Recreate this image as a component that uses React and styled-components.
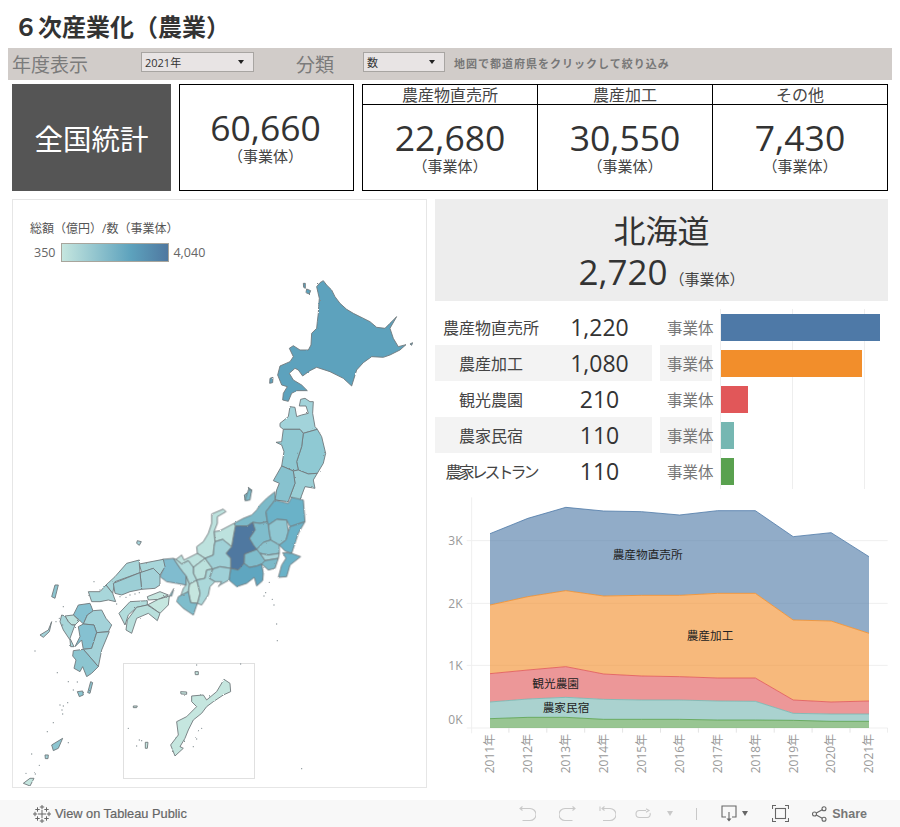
import styled, { createGlobalStyle } from "styled-components";

const FONT = '"Open Sans", "Noto Sans CJK JP", sans-serif';

const GlobalStyle = createGlobalStyle`
  html, body {
    margin: 0;
    background: #fff;
  }
  body {
    font-family: ${FONT};
    color: #333;
  }
`;

// prefecture outlines, each group traced in its own crop of the map
const mapGroups = [
  {
    x: 180,
    y: 270,
    shapes: [
      ["#5da2bd", "430,32 420,38 410,50 414,68 418,85 416,110 415,130 412,155 410,175 395,190 393,225 385,240 360,240 340,227 328,235 340,260 330,275 300,288 293,315 305,345 322,350 310,370 308,390 325,394 335,370 350,362 382,362 365,345 340,330 328,310 345,295 355,300 368,318 390,302 410,292 450,305 490,325 515,348 530,300 550,278 575,260 610,262 630,255 660,240 678,224 655,230 640,205 630,175 650,140 630,160 615,175 590,172 570,155 520,130 500,118 480,100 465,80 455,60 440,45"],
      ["#5da2bd", "380,57 392,62 388,72 378,68"],
      ["#5da2bd", "370,40 376,40 376,55 371,52"],
      ["#5da2bd", "270,325 279,322 278,338 269,340"],
      ["#5da2bd", "690,222 698,218 695,226"],
      ["#a2d3da", "300,460 325,440 330,410 345,412 350,440 365,435 385,430 378,408 358,408 362,388 375,385 390,395 400,395 398,430 405,470 412,478 370,490 360,478 310,478 300,470"],
      ["#8fc9d3", "370,490 412,478 425,500 437,550 430,580 412,610 385,612 355,600 350,575 365,530"],
      ["#8ec8d2", "310,478 360,478 370,490 365,530 350,575 355,600 340,603 305,588 312,545 305,525 288,517 305,515"],
      ["#9bcfd6", "355,600 385,612 412,610 400,630 405,655 375,650 358,695 330,680 345,640 340,603"],
      ["#87c2cf", "305,588 340,603 345,640 330,680 325,695 285,690 290,660 298,640 280,632"],
      ["#7bbac9", "205,652 215,660 205,690 195,690 193,675 208,665"],
    ],
  },
  {
    x: 160,
    y: 490,
    shapes: [
      ["#7bbac9", "222,100 250,85 275,75 290,60 300,45 320,25 345,5 345,30 318,65 322,95 300,100 278,97 262,108 226,108"],
      ["#6bb2c8", "345,30 385,40 395,22 430,30 435,95 390,110 380,90 350,88 325,105 322,95 318,65"],
      ["#8fc7d2", "325,105 350,88 380,90 385,125 378,150 358,165 332,150 328,130"],
      ["#6bb2c8", "390,110 435,95 415,130 395,190 375,183 358,165 378,150 385,125"],
      ["#7fbdcc", "278,97 300,100 322,95 325,105 328,130 332,150 310,157 290,178 280,165 268,145 285,120"],
      ["#8cc5d0", "290,178 310,157 332,150 358,165 358,190 325,195 300,190"],
      ["#6bb2c8", "368,188 395,190 422,200 390,225 380,260 355,262 365,225 378,205"],
      ["#a6d4da", "300,190 325,195 358,190 355,205 325,210 315,212"],
      ["#7bbac9", "315,212 325,210 355,205 345,235 325,240 305,222"],
      ["#7fbdcc", "253,192 290,178 300,190 315,212 305,222 290,228 268,232 252,220"],
      ["#4f78a0", "226,108 262,108 278,97 285,120 268,145 280,165 290,178 253,192 252,220 235,240 212,235 212,205 198,190 215,170 220,140"],
      ["#5ea6c0", "212,235 235,240 252,220 268,232 290,228 305,222 310,250 308,272 290,288 283,262 260,280 230,290 207,270"],
      ["#bde2de", "162,125 180,122 222,100 226,108 220,140 215,170 188,148 165,155"],
      ["#bde2de", "110,170 130,155 145,130 155,100 155,72 190,57 198,65 172,80 172,100 162,125 165,155 162,170 160,195 135,205 112,190"],
      ["#bde2de", "48,208 65,195 72,210 112,190 135,205 100,232 85,212 65,222"],
      ["#a0d1d7", "165,155 188,148 215,170 198,190 212,205 212,235 180,230 158,237 135,205 160,195 162,170"],
      ["#9fd0d7", "158,237 180,230 212,235 207,270 180,285 175,290 185,275 165,275 148,265"],
      ["#bbe1dd", "100,232 135,205 158,237 140,240 135,265 110,270 100,250"],
      ["#abd8da", "140,240 158,237 148,265 165,275 150,290 145,315 125,345 112,340 120,310 110,270 135,265"],
      ["#c5e6df", "88,282 110,270 120,310 112,340 92,338 85,305"],
      ["#b2dcdc", "40,205 48,208 65,222 85,212 100,232 100,250 110,270 88,282 78,258 60,235"],
      ["#b2dcdc", "78,258 88,282 85,305 62,318 70,295 78,285"],
      ["#80bccf", "8,208 40,205 60,235 78,258 78,285 50,280 20,275 0,260 10,235"],
      ["#7fbdcc", "55,320 85,305 92,338 112,340 100,375 70,355 50,335"],
      ["#7fbdcc", "28,318 42,295 35,318"],
      ["#7bbac9", "265,0 275,0 270,30 255,32"],
    ],
  },
  {
    x: 50,
    y: 550,
    shapes: [
      ["#a8d6da", "268,42 340,28 345,50 330,75 310,55 275,68"],
      ["#a3d2d9", "270,68 310,55 330,75 330,105 315,115 275,118"],
      ["#a8d6da", "168,105 195,80 230,40 268,30 268,42 270,68 195,95 188,130"],
      ["#9ccfd6", "190,100 270,68 275,118 240,125 215,135 195,130"],
      ["#a8d6da", "115,125 150,125 168,105 188,130 197,155 175,150 150,155 125,155"],
      ["#c5e6df", "292,140 330,125 355,135 325,148 295,150"],
      ["#c5e6df", "292,165 325,148 358,138 355,165 330,190 300,168"],
      ["#b2dcdc", "207,190 240,155 292,152 292,165 260,172 235,195 225,225"],
      ["#b8dfdc", "228,240 232,210 260,172 292,165 330,190 322,212 295,190 260,205 245,250"],
      ["#85c1d1", "85,165 120,160 130,185 112,195 100,222 88,210 70,195"],
      ["#bde2de", "45,198 70,195 88,212 75,225 65,225 55,215"],
      ["#a3d2d9", "112,195 130,182 155,180 168,205 185,225 175,245 140,248 132,225 100,222"],
      ["#85c1d1", "85,230 100,222 132,225 140,248 125,295 100,298 95,270 75,290 90,260"],
      ["#a3d2d9", "140,248 178,245 155,300 145,350 100,298 125,295"],
      ["#8cc5d0", "70,302 100,298 145,350 125,370 110,380 98,350 90,365 72,355 78,330 68,318"],
      ["#a8d6da", "35,195 45,198 55,215 65,225 75,225 60,265 72,290 62,290 60,270 40,240 30,215"],
    ],
  },
  {
    x: 20,
    y: 490,
    shapes: [
      ["#a3d2d9", "60,435 85,420 95,395 88,425 70,442"],
      ["#8cc5d0", "105,285 115,285 105,325 95,320"],
      ["#8cc5d0", "172,605 188,603 190,615 178,620"],
      ["#8cc5d0", "212,575 218,578 210,610 203,608"],
      ["#8cc5d0", "95,765 128,745 115,775 100,782"],
      ["#a3d2d9", "75,795 85,795 84,806 76,806"],
      ["#c5e6df", "10,880 30,865 42,865 30,888"],
      ["#a3d2d9", "352,152 364,155 358,166 350,160"],
      ["#c5e6df", "612,568 630,580 632,605 610,615 580,635 560,650 545,670 520,690 505,720 495,745 480,770 490,775 465,798 452,765 475,735 470,695 500,680 530,650 515,635 515,618 550,615 560,630 590,605"],
      ["#c5e6df", "482,605 500,606 500,613 483,612"],
      ["#c5e6df", "525,545 535,545 535,554 526,554"],
      ["#c5e6df", "340,648 352,648 350,653 340,653"],
      ["#c5e6df", "376,757 384,757 382,775 376,775"],
    ],
  },
];

const specks = [
  "770,402", "772,452", "748,277", "737,308", "732,318", "757,328", "762,345", "845,836", "45,483", "112,548", "145,575", "172,576",
  "160,600", "143,638", "130,648", "126,660", "120,645", "128,672", "100,698", "82,725", "145,758", "35,792", "58,826", "18,850", "46,852",
  "222,275", "240,300", "530,525", "662,522", "325,715", "358,750", "350,768", "365,752", "520,770", "530,747",
  "330,315", "345,312", "358,308", "300,320", "318,322", "290,342", "130,350", "118,385", "108,395", "128,405", "545,715", "535,722",
];

const years = ["2011", "2012", "2013", "2014", "2015", "2016", "2017", "2018", "2019", "2020", "2021"];
const yearX = (i) => 165 + i * 113.7;

const layers = [
  { color: "#4e79a7", top: [131, 85, 52, 63, 65, 75, 62, 62, 140, 128, 200], bottom: [345, 320, 302, 318, 316, 316, 310, 310, 390, 393, 430] },
  { color: "#f28e2b", top: [345, 320, 302, 318, 316, 316, 310, 310, 390, 393, 430], bottom: [551, 540, 530, 552, 558, 560, 564, 564, 630, 636, 633] },
  { color: "#e15759", top: [551, 540, 530, 552, 558, 560, 564, 564, 630, 636, 633], bottom: [636, 627, 622, 628, 630, 630, 633, 634, 670, 672, 672] },
  { color: "#76b7b2", top: [636, 627, 622, 628, 630, 630, 633, 634, 670, 672, 672], bottom: [686, 682, 682, 688, 688, 688, 690, 690, 691, 694, 694] },
  { color: "#59a14f", top: [686, 682, 682, 688, 688, 688, 690, 690, 691, 694, 694], bottom: [714, 714, 714, 714, 714, 714, 714, 714, 714, 714, 714] },
];

const rows = [
  { label: "農産物直売所", value: "1,220", color: "#4e79a7", width: 159 },
  { label: "農産加工", value: "1,080", color: "#f28e2b", width: 141 },
  { label: "観光農園", value: "210", color: "#e15759", width: 27 },
  { label: "農家民宿", value: "110", color: "#76b7b2", width: 13 },
  { label: "農家レストラン", value: "110", color: "#59a14f", width: 13 },
];

const Page = styled.div`
  width: 900px;
  height: 827px;
  display: flex;
  flex-direction: column;
  overflow: hidden;
  & > * {
    flex-shrink: 0;
  }
`;

const Title = styled.h1`
  height: 48px;
  margin: 0;
  padding: 0 0 0 14px;
  box-sizing: border-box;
  font-size: 24px;
  font-weight: 700;
  line-height: 54px;
  color: #333;
`;

const FilterBar = styled.div`
  height: 32px;
  margin: 0 8px;
  padding-left: 4px;
  display: flex;
  align-items: center;
  background: #d1ccc9;
`;

const FilterLabel = styled.span`
  width: ${(p) => p.$width}px;
  margin-left: ${(p) => p.$offset || 0}px;
  font-size: 19px;
  color: #7b7b7b;
  white-space: nowrap;
`;

const Select = styled.div`
  width: ${(p) => p.$width}px;
  height: 20px;
  margin-bottom: 4px;
  padding: 0 9px 0 3px;
  box-sizing: border-box;
  display: flex;
  align-items: center;
  justify-content: space-between;
  background: #e8e4e4;
  border: 1px solid #a8a5a2;
  font-size: 11px;
  color: #333;

  &::after {
    content: "";
    border-left: 3.5px solid transparent;
    border-right: 3.5px solid transparent;
    border-top: 4px solid #222;
  }
`;

const Note = styled.span`
  margin: 0 0 2px 9px;
  font-size: 11px;
  font-weight: 700;
  letter-spacing: 1px;
  color: #777;
  white-space: nowrap;
`;

const StatsRow = styled.div`
  height: 107px;
  margin-top: 4px;
  padding: 0 12px;
  display: flex;
`;

const NationalBox = styled.div`
  width: 159px;
  display: flex;
  align-items: center;
  justify-content: center;
  background: #555;
  color: #fff;
  font-size: 28.5px;
`;

const TotalCard = styled.div`
  width: 175px;
  margin-left: 8px;
  padding: 0 2px 2px 0;
  box-sizing: border-box;
  border: 1px solid #000;
  display: flex;
  flex-direction: column;
  align-items: center;
  justify-content: center;
`;

const BreakdownTable = styled.div`
  width: 526px;
  margin-left: 8px;
  box-sizing: border-box;
  border: 1px solid #000;
  display: flex;
`;

const BreakdownCol = styled.div`
  flex: 1;
  display: flex;
  flex-direction: column;
  align-items: center;
  & + & {
    border-left: 1px solid #000;
  }
`;

const BreakdownHead = styled.div`
  width: 100%;
  height: 20px;
  box-sizing: border-box;
  border-bottom: 1px solid #000;
  font-size: 16px;
  line-height: 20px;
  text-align: center;
  color: #444;
`;

const BreakdownBody = styled.div`
  flex: 1;
  display: flex;
  flex-direction: column;
  align-items: center;
  padding-top: 12px;
`;

const BigNumber = styled.div`
  font-size: 35.5px;
  line-height: 40px;
  color: #333;
`;

const Unit = styled.div`
  font-size: 15px;
  line-height: 19px;
  color: #444;
`;

const Main = styled.div`
  margin-top: 8px;
  padding: 0 12px;
  display: flex;
  gap: 8px;
`;

const MapPanel = styled.div`
  position: relative;
  width: 415px;
  height: 589px;
  box-sizing: border-box;
  border: 1px solid #e6e6e6;
  padding: 22px 0 0 17px;
`;

const MapSvg = styled.svg`
  position: absolute;
  left: -1px;
  top: -1px;
`;

const LegendTitle = styled.div`
  position: relative;
  font-size: 12px;
  line-height: 14px;
  color: #555;
`;

const LegendScale = styled.div`
  position: relative;
  margin: 7px 0 0 4px;
  display: flex;
  align-items: center;
  font-size: 12.5px;
  color: #666;
`;

const LegendRamp = styled.div`
  width: 108px;
  height: 19px;
  margin: 0 4px 0 6px;
  box-sizing: border-box;
  border: 1px solid #a8a59c;
  background: linear-gradient(to right, #c5e6df, #5da2bd 65%, #4f78a0);
`;

const RightCol = styled.div`
  width: 453px;
  display: flex;
  flex-direction: column;
`;

const SelectedBox = styled.div`
  height: 102px;
  box-sizing: border-box;
  padding-top: 11px;
  display: flex;
  flex-direction: column;
  align-items: center;
  background: #ededed;
`;

const SelectedName = styled.div`
  font-size: 32px;
  line-height: 42px;
  color: #333;
`;

const SelectedLine = styled.div`
  display: flex;
  align-items: baseline;
  gap: 2px;
  line-height: 40px;
  font-size: 35px;
  color: #333;

  small {
    font-size: 15px;
    color: #444;
  }
`;

const RowList = styled.div`
  margin-top: 8px;
`;

const Row = styled.div`
  height: 36px;
  display: flex;
`;

const Band = styled.div`
  width: 217px;
  display: flex;
  align-items: center;
  background: ${(p) => (p.$shaded ? "#f3f3f3" : "transparent")};
`;

const RowLabel = styled.div`
  width: 112px;
  font-size: 16px;
  text-align: center;
  white-space: nowrap;
  color: #444;
  ${(p) => p.$narrow && "letter-spacing: -3px;"}
`;

const RowValue = styled.div`
  width: 105px;
  font-size: 23px;
  text-align: center;
  color: #333;
`;

const RowUnit = styled.div`
  width: 52px;
  margin-left: 8px;
  padding-left: 7px;
  box-sizing: border-box;
  display: flex;
  align-items: center;
  font-size: 15.5px;
  white-space: nowrap;
  color: #777;
  background: ${(p) => (p.$shaded ? "#f3f3f3" : "transparent")};
`;

const BarCell = styled.div`
  width: 168px;
  margin-left: 8px;
  padding: 5px 0 4px 1px;
  box-sizing: border-box;
  background-image: linear-gradient(#eee, #eee), linear-gradient(#eee, #eee), linear-gradient(#eee, #eee);
  background-size: 1px 100%;
  background-repeat: no-repeat;
  background-position: 0 0, 72px 0, 144px 0;
`;

const Bar = styled.div`
  height: 27px;
  width: ${(p) => p.$width}px;
  background: ${(p) => p.$color};
`;

const ChartSvg = styled.svg`
  display: block;
  margin-top: 1px;
`;

const Footer = styled.div`
  height: 27px;
  margin-top: 12px;
  padding: 0 33px;
  display: flex;
  align-items: center;
  background: #f8f8f8;
  font-family: "Liberation Sans", sans-serif;
  font-size: 12.8px;
  color: #666;
`;

const FooterLink = styled.span`
  margin-left: 4px;
  -webkit-text-stroke: 0.2px #666;
`;

const Tools = styled.div`
  margin-left: auto;
  display: flex;
  align-items: center;
`;

const ToolIcon = styled.svg`
  display: block;
  margin-left: ${(p) => p.$gap}px;
  fill: none;
  stroke: ${(p) => (p.$active ? "#666" : "#c9c9c9")};
  stroke-width: 1.1;
`;

const Caret = styled.span`
  margin-left: ${(p) => p.$gap}px;
  border-left: 3.5px solid transparent;
  border-right: 3.5px solid transparent;
  border-top: 5px solid ${(p) => (p.$active ? "#666" : "#c9c9c9")};
`;

const Divider = styled.span`
  margin-left: 23px;
  width: 1px;
  height: 12px;
  background: #c9c9c9;
`;

const ShareText = styled.span`
  margin-left: 5px;
  font-size: 12.5px;
  font-weight: 700;
  color: #777;
`;

function TableauLogo() {
  const marks = [
    [9, 9, 4], [9, 2, 2.2], [9, 16, 2.2], [2, 9, 2.2], [16, 9, 2.2],
    [4.5, 4.5, 2.2], [13.5, 4.5, 2.2], [4.5, 13.5, 2.2], [13.5, 13.5, 2.2],
  ];
  return (
    <svg width="18" height="18" viewBox="0 0 18 18" stroke="#666" strokeWidth="1" fill="none">
      {marks.map(([x, y, r]) => (
        <path key={`${x}-${y}`} d={`M${x - r} ${y}H${x + r}M${x} ${y - r}V${y + r}`} />
      ))}
    </svg>
  );
}

function MapDrawing() {
  return (
    <MapSvg width="415" height="589" viewBox="12 199 415 589">
      <defs>
        <filter id="rough" x="0" y="0" width="100%" height="100%">
          <feTurbulence type="fractalNoise" baseFrequency="0.35" numOctaves="2" seed="4" />
          <feDisplacementMap in="SourceGraphic" scale="1.8" />
          <feGaussianBlur stdDeviation="0.25" />
        </filter>
      </defs>
      <rect x="123.5" y="663.5" width="131" height="115" fill="none" stroke="#e0e0e0" />
      <g stroke="#70787c" strokeWidth="0.9" strokeLinejoin="round" filter="url(#rough)">
        {mapGroups.map((group) => (
          <g key={group.x} transform={`translate(${group.x} ${group.y}) scale(0.3333)`}>
            {group.shapes.map(([fill, points]) => (
              <polygon key={points} points={points} fill={fill} vectorEffect="non-scaling-stroke" />
            ))}
          </g>
        ))}
        <g transform="translate(20 490) scale(0.3333)">
          {specks.map((s) => {
            const [x, y] = s.split(",");
            return <circle key={s} cx={x} cy={y} r="2" fill="#8a9498" stroke="none" />;
          })}
        </g>
      </g>
    </MapSvg>
  );
}

function AreaChart() {
  return (
    <ChartSvg width="453" height="298" viewBox="0 0 1359 894">
      {[152, 340, 526, 714].map((y) => (
        <line key={y} x1="95" x2="1358" y1={y} y2={y} stroke="#efefef" strokeWidth="3" />
      ))}
      <line x1="110" x2="110" y1="22" y2="730" stroke="#efefef" strokeWidth="3" />
      {years.map((y, i) => (
        <line key={y} x1={108 + (i + 1) * 113.7} x2={108 + (i + 1) * 113.7} y1="714" y2="728" stroke="#e4e4e4" strokeWidth="3" />
      ))}
      {layers.map((l) => {
        const up = l.top.map((t, i) => `${yearX(i)},${t}`);
        const down = l.bottom.map((b, i) => `${yearX(i)},${b}`).reverse();
        return (
          <g key={l.color}>
            <polygon points={[...up, ...down].join(" ")} fill={l.color} fillOpacity="0.62" />
            <polyline points={up.join(" ")} fill="none" stroke={l.color} strokeWidth="3" strokeOpacity="0.8" />
          </g>
        );
      })}
      <g fontFamily={FONT} fontSize="36" fill="#999">
        <text x="40" y="165">3K</text>
        <text x="40" y="354">2K</text>
        <text x="40" y="540">1K</text>
        <text x="40" y="702">0K</text>
        {years.map((y, i) => (
          <text key={y} transform={`translate(${yearX(i) + 13} 850) rotate(-90)`}>{`${y}年`}</text>
        ))}
      </g>
      <g fontFamily={FONT} fontSize="35" fill="#222" textAnchor="middle">
        <text x="638" y="206">農産物直売所</text>
        <text x="825" y="449">農産加工</text>
        <text x="362" y="593">観光農園</text>
        <text x="393" y="665">農家民宿</text>
      </g>
    </ChartSvg>
  );
}

export default function App() {
  return (
    <>
      <GlobalStyle />
      <Page>
        <Title>６次産業化（農業）</Title>
        <FilterBar>
          <FilterLabel $width={129}>年度表示</FilterLabel>
          <Select $width={113}>2021年</Select>
          <FilterLabel $width={67} $offset={42}>分類</FilterLabel>
          <Select $width={82}>数</Select>
          <Note>地図で都道府県をクリックして絞り込み</Note>
        </FilterBar>

        <StatsRow>
          <NationalBox>全国統計</NationalBox>
          <TotalCard>
            <BigNumber>60,660</BigNumber>
            <Unit>（事業体）</Unit>
          </TotalCard>
          <BreakdownTable>
            {[
              ["農産物直売所", "22,680"],
              ["農産加工", "30,550"],
              ["その他", "7,430"],
            ].map(([head, value]) => (
              <BreakdownCol key={head}>
                <BreakdownHead>{head}</BreakdownHead>
                <BreakdownBody>
                  <BigNumber>{value}</BigNumber>
                  <Unit>（事業体）</Unit>
                </BreakdownBody>
              </BreakdownCol>
            ))}
          </BreakdownTable>
        </StatsRow>

        <Main>
          <MapPanel>
            <MapDrawing />
            <LegendTitle>総額（億円）/数（事業体）</LegendTitle>
            <LegendScale>
              350
              <LegendRamp />
              4,040
            </LegendScale>
          </MapPanel>

          <RightCol>
            <SelectedBox>
              <SelectedName>北海道</SelectedName>
              <SelectedLine>
                2,720<small>（事業体）</small>
              </SelectedLine>
            </SelectedBox>
            <RowList>
              {rows.map((r, i) => (
                <Row key={r.label}>
                  <Band $shaded={i % 2 === 1}>
                    <RowLabel $narrow={r.label.length > 6}>{r.label}</RowLabel>
                    <RowValue>{r.value}</RowValue>
                  </Band>
                  <RowUnit $shaded={i % 2 === 1}>事業体</RowUnit>
                  <BarCell>
                    <Bar $width={r.width} $color={r.color} />
                  </BarCell>
                </Row>
              ))}
            </RowList>
            <AreaChart />
          </RightCol>
        </Main>

        <Footer>
          <TableauLogo />
          <FooterLink>View on Tableau Public</FooterLink>
          <Tools>
            <ToolIcon $gap={0} width="17" height="16" viewBox="0 0 17 16">
              <path d="M1 2.5H11a5 5 0 0 1 0 12H3.5M3.5 .5 1 2.5 3.5 4.5" />
            </ToolIcon>
            <ToolIcon $gap={23} width="17" height="16" viewBox="0 0 17 16">
              <path d="M16 2.5H6a5 5 0 0 0 0 12H13.5M13.5 .5 16 2.5 13.5 4.5" />
            </ToolIcon>
            <ToolIcon $gap={23} width="17" height="16" viewBox="0 0 17 16">
              <path d="M1 .5V5M3 2.5H11a5 5 0 0 1 0 12H4M5.5 .5 3 2.5 5.5 4.5" />
            </ToolIcon>
            <ToolIcon $gap={19} width="17" height="12" viewBox="0 0 17 12">
              <path d="M11 2.5H4.5a3.2 3.2 0 0 0 0 7H12a3.2 3.2 0 0 0 3-4.5M11 .8 14 2.5 11 4.2" />
            </ToolIcon>
            <Caret $gap={15} />
            <Divider />
            <ToolIcon $active $gap={24} width="16" height="17" viewBox="0 0 16 17">
              <path d="M5 12H1V1H15V12H11M8 7V15" />
              <path d="M5.5 13.5H10.5L8 16.5Z" fill="#666" stroke="none" />
            </ToolIcon>
            <Caret $active $gap={5} />
            <ToolIcon $active $gap={24} width="17" height="17" viewBox="0 0 17 17">
              <path d="M.5 4V.5H4M13 .5H16.5V4M.5 13V16.5H4M13 16.5H16.5V13" />
              <rect x="3.5" y="3.5" width="10" height="10" />
            </ToolIcon>
            <ToolIcon $active $gap={23} width="15" height="16" viewBox="0 0 15 16">
              <circle cx="2.5" cy="8" r="2" />
              <circle cx="12" cy="2.8" r="2" />
              <circle cx="12" cy="13.2" r="2" />
              <path d="M4.3 7 10.2 3.8M4.3 9 10.2 12.2" />
            </ToolIcon>
            <ShareText>Share</ShareText>
          </Tools>
        </Footer>
      </Page>
    </>
  );
}
